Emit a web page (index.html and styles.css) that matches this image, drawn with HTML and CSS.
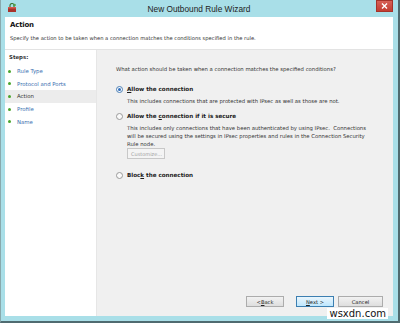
FILE: index.html
```html
<!DOCTYPE html>
<html>
<head>
<meta charset="utf-8">
<link rel="stylesheet" href="styles.css">
</head>
<body>
<div class="window">
  <div class="titlebar">
    <svg class="appicon" width="10" height="10" viewBox="0 0 10 10">
      <rect x="1" y="4" width="8" height="5" fill="#a8322a"/>
      <rect x="1" y="4" width="8" height="1.5" fill="#d8574a"/>
      <path d="M3 4 V2.5 A2 2 0 0 1 7 2.5 V4" fill="none" stroke="#3d7a3a" stroke-width="1.2"/>
      <circle cx="7.5" cy="2" r="1.3" fill="#52a04a"/>
    </svg>
    <div class="title">New Outbound Rule Wizard</div>
    <div class="close"><svg width="7" height="6" viewBox="0 0 7 6"><path d="M1 0.5 L6 5.5 M6 0.5 L1 5.5" stroke="#fff" stroke-width="1.4"/></svg></div>
  </div>
  <div class="client">
    <div class="header">
      <div class="h-title">Action</div>
      <div class="h-desc">Specify the action to be taken when a connection matches the conditions specified in the rule.</div>
    </div>
    <div class="main">
      <div class="steps">
        <div class="steps-title">Steps:</div>
        <div class="step"><span class="dot"></span>Rule Type</div>
        <div class="step"><span class="dot"></span>Protocol and Ports</div>
        <div class="step current"><span class="dot"></span>Action</div>
        <div class="step"><span class="dot"></span>Profile</div>
        <div class="step"><span class="dot"></span>Name</div>
      </div>
      <div class="content">
        <div class="question">What action should be taken when a connection matches the specified conditions?</div>
        <div class="option">
          <div class="opt-head"><span class="radio checked"></span><span class="opt-label"><u>A</u>llow the connection</span></div>
          <div class="opt-desc">This includes connections that are protected with IPsec as well as those are not.</div>
        </div>
        <div class="option">
          <div class="opt-head"><span class="radio"></span><span class="opt-label">Allow the <u>c</u>onnection if it is secure</span></div>
          <div class="opt-desc">This includes only connections that have been authenticated by using IPsec.&nbsp; Connections will be secured using the settings in IPsec properties and rules in the Connection Security Rule node.</div>
          <div class="customize">Customize...</div>
        </div>
        <div class="option">
          <div class="opt-head"><span class="radio"></span><span class="opt-label">Bloc<u>k</u> the connection</span></div>
        </div>
        <div class="buttons">
          <div class="btn">&lt; <u>B</u>ack</div>
          <div class="btn default"><u>N</u>ext &gt;</div>
          <div class="btn cancel">Cancel</div>
        </div>
      </div>
    </div>
  </div>
  <div class="watermark">wsxdn.com</div>
</div>
</body>
</html>
```

FILE: styles.css
```css
html, body {
  margin: 0;
  padding: 0;
  width: 400px;
  height: 323px;
  overflow: hidden;
  background: #6d8d92;
}
body {
  font-family: "DejaVu Sans", "Liberation Sans", sans-serif;
  color: #1e1e1e;
}
.window {
  position: relative;
  width: 400px;
  height: 323px;
  box-sizing: border-box;
  background: #a9dfe8;
  border-left: 1px solid #8aa9ad;
  border-right: 2px solid #4f6b70;
  border-bottom: 2px solid #4f6b70;
  display: flex;
  flex-direction: column;
  padding: 0 5px 5px 4px;
}
.titlebar {
  height: 17px;
  display: flex;
  align-items: center;
  position: relative;
  flex: none;
}
.appicon {
  position: absolute;
  left: 2px;
  top: 3px;
}
.title {
  flex: 1;
  text-align: center;
  font-family: "Liberation Sans", sans-serif;
  font-size: 8.3px;
  color: #222;
  padding-top: 1px;
}
.close {
  position: absolute;
  right: 0;
  top: 0;
  width: 17px;
  height: 12px;
  background: linear-gradient(#d9645a, #c0392e);
  display: flex;
  align-items: center;
  justify-content: center;
  box-shadow: inset 0 0 0 1px #a5332a;
}
.client {
  flex: 1;
  display: flex;
  flex-direction: column;
  background: #f0f0f0;
}
.header {
  background: #fff;
  height: 33px;
  box-sizing: border-box;
  padding: 4px 0 0 5px;
  border-bottom: 1px solid #e3e3e3;
  flex: none;
}
.h-title {
  font-weight: bold;
  font-size: 7px;
  letter-spacing: -0.2px;
  color: #111;
}
.h-desc {
  margin-top: 6px;
  font-size: 5.2px;
  color: #333;
}
.main {
  flex: 1;
  display: flex;
}
.steps {
  width: 91px;
  background: #fff;
  padding-top: 4px;
  border-right: 1px solid #e6e6e6;
  flex: none;
}
.steps-title {
  font-weight: bold;
  font-size: 5.4px;
  padding-left: 4px;
  height: 11px;
  color: #333;
}
.step {
  display: flex;
  align-items: center;
  height: 12.6px;
  padding-left: 3px;
  font-size: 5.4px;
  color: #3a6fb0;
}
.step.current {
  background: #ececec;
  color: #333;
}
.dot {
  width: 3px;
  height: 3px;
  border-radius: 50%;
  background: #4aa52c;
  margin-right: 6px;
}
.content {
  flex: 1;
  padding: 16px 0 0 19px;
  display: flex;
  flex-direction: column;
  font-size: 5.3px;
  color: #333;
}
.question {
  height: 19px;
}
.option {
  margin-bottom: 7px;
}
.opt-head {
  display: flex;
  align-items: center;
  height: 8px;
}
.radio {
  width: 5px;
  height: 5px;
  border-radius: 50%;
  border: 1px solid #9a9a9a;
  background: #fafafa;
  margin-right: 4px;
  box-sizing: content-box;
  position: relative;
}
.radio.checked {
  border-color: #4b7fb5;
}
.radio.checked::after {
  content: "";
  position: absolute;
  left: 1px;
  top: 1px;
  width: 3px;
  height: 3px;
  border-radius: 50%;
  background: #2f6fc0;
}
.opt-label {
  font-weight: bold;
  font-size: 5.6px;
  color: #1a1a1a;
}
.opt-desc {
  padding-left: 11px;
  padding-right: 24px;
  margin-top: 4px;
  line-height: 8px;
}
.customize {
  margin: 0 0 5px 11px;
  width: 38px;
  height: 11px;
  border: 1px solid #c8c8c8;
  background: #f4f4f4;
  color: #a0a0a0;
  font-size: 5px;
  display: flex;
  align-items: center;
  padding-left: 3px;
  box-sizing: border-box;
}
.buttons {
  margin-top: auto;
  display: flex;
  justify-content: flex-end;
  gap: 4px;
  padding: 0 10px 9px 0;
}
.btn {
  width: 38px;
  height: 11px;
  box-sizing: border-box;
  border: 1px solid #acacac;
  background: linear-gradient(#f2f2f2, #dedede);
  font-size: 5.2px;
  display: flex;
  align-items: center;
  justify-content: center;
  color: #222;
}
.btn.default {
  border-color: #3c7fb1;
  background: linear-gradient(#eaf6fd, #bee6fd);
  margin-left: 8px;
}
.btn.cancel {
  width: 45px;
}
.watermark {
  position: absolute;
  right: 10px;
  bottom: 2px;
  font-family: "DejaVu Sans", sans-serif;
  font-size: 10px;
  color: #111;
  background: #fff;
  padding: 0 2px;
  line-height: 11px;
}
```
